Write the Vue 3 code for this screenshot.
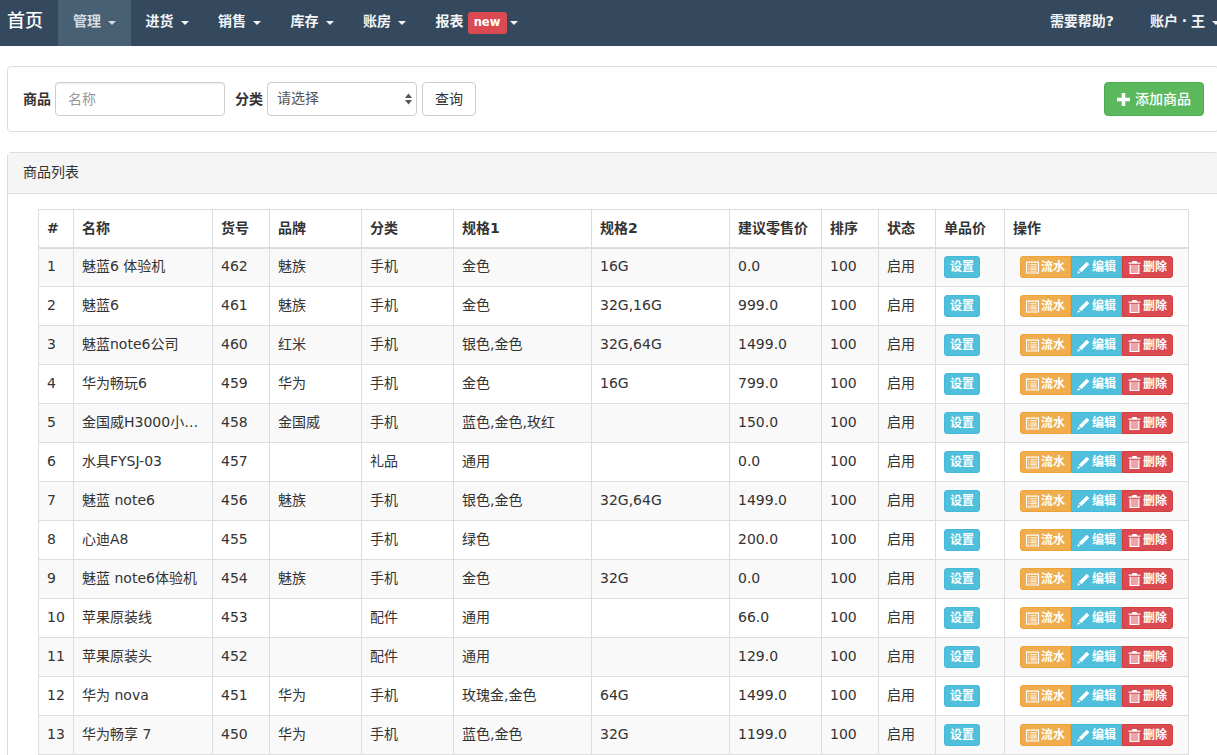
<script setup>
const menus = [
  { t: '管理', active: true }, { t: '进货' }, { t: '销售' }, { t: '库存' }, { t: '账房' }, { t: '报表', badge: 'new' }
]
const cols = [35, 139, 57, 92, 92, 138, 138, 92, 57, 57, 69, 184]
const heads = ['#', '名称', '货号', '品牌', '分类', '规格1', '规格2', '建议零售价', '排序', '状态', '单品价', '操作']
const rows = [
  [1, '魅蓝6 体验机', 462, '魅族', '手机', '金色', '16G', '0.0'],
  [2, '魅蓝6', 461, '魅族', '手机', '金色', '32G,16G', '999.0'],
  [3, '魅蓝note6公司', 460, '红米', '手机', '银色,金色', '32G,64G', '1499.0'],
  [4, '华为畅玩6', 459, '华为', '手机', '金色', '16G', '799.0'],
  [5, '金国威H3000小蜜蜂', 458, '金国威', '手机', '蓝色,金色,玫红', '', '150.0'],
  [6, '水具FYSJ-03', 457, '', '礼品', '通用', '', '0.0'],
  [7, '魅蓝 note6', 456, '魅族', '手机', '银色,金色', '32G,64G', '1499.0'],
  [8, '心迪A8', 455, '', '手机', '绿色', '', '200.0'],
  [9, '魅蓝 note6体验机', 454, '魅族', '手机', '金色', '32G', '0.0'],
  [10, '苹果原装线', 453, '', '配件', '通用', '', '66.0'],
  [11, '苹果原装头', 452, '', '配件', '通用', '', '129.0'],
  [12, '华为 nova', 451, '华为', '手机', '玫瑰金,金色', '64G', '1499.0'],
  [13, '华为畅享 7', 450, '华为', '手机', '蓝色,金色', '32G', '1199.0']
]
</script>

<template>
  <div class="page">
    <nav class="nav">
      <a class="brand">首页</a>
      <a v-for="m in menus" :key="m.t" class="item" :class="{ active: m.active }">
        {{ m.t }}<span v-if="m.badge" class="new">{{ m.badge }}</span><i class="caret" :class="{ tight: m.badge }"></i>
      </a>
      <span class="grow"></span>
      <a class="item help">需要帮助?</a>
      <a class="item acct">账户 · 王<i class="caret"></i></a>
    </nav>

    <section class="panel search">
      <label class="lab">商品</label>
      <input class="ctl name" placeholder="名称" />
      <label class="lab second">分类</label>
      <div class="ctl sel">
        <span>请选择</span>
        <svg class="updown" width="7" height="12" viewBox="0 0 7 12"><path d="M3.5 0.5 7 5H0zM3.5 11.5 0 7h7z" fill="#555" /></svg>
      </div>
      <button class="btn-q">查询</button>
      <span class="grow"></span>
      <button class="btn-add">
        <svg width="13" height="13" viewBox="0 0 13 13"><path d="M4.7 0h3.6v4.7H13v3.6H8.3V13H4.7V8.3H0V4.7h4.7z" fill="#fff" /></svg>
        添加商品
      </button>
    </section>

    <section class="panel list">
      <div class="head">商品列表</div>
      <div class="body">
        <table>
          <colgroup><col v-for="(c, i) in cols" :key="i" :style="{ width: c + 'px' }" /></colgroup>
          <thead>
            <tr><th v-for="h in heads" :key="h">{{ h }}</th></tr>
          </thead>
          <tbody>
            <tr v-for="r in rows" :key="r[0]">
              <td v-for="(v, i) in r" :key="i">{{ v }}</td>
              <td>100</td>
              <td>启用</td>
              <td class="btns"><button class="xs info">设置</button></td>
              <td class="btns">
                <div class="group">
                  <button class="xs warn">
                    <svg width="13" height="13" viewBox="0 0 12 12"><path d="M0 .5h12v11H0zM1 1.500v9h10v-9zM2 3h1v1H2zM4 3h6v1H4zM2 5h1v1H2zM4 5h6v1H4zM2 7h1v1H2zM4 7h6v1H4zM2 9h1v.8H2zM4 9h6v.8H4z" fill="#fff" fill-rule="evenodd" /></svg>流水
                  </button>
                  <button class="xs info">
                    <svg width="13" height="13" viewBox="0 0 12 12"><path d="M9 .6 11.400 3 4 10.400 1.600 8zM1.100 8.900l2 2-2.900.9z" fill="#fff" /></svg>编辑
                  </button>
                  <button class="xs danger">
                    <svg width="13" height="13" viewBox="0 0 12 12"><path d="M1.500 3.500h9V12h-9z" fill="#fff" fill-opacity=".5" /><path d="M4.200 0h3.600l.7 1.400h3v1.100H.5V1.400h3zM1.500 3.500h1V11h7V3.500h1V12h-9z" fill="#fff" /></svg>删除
                  </button>
                </div>
              </td>
            </tr>
          </tbody>
        </table>
      </div>
    </section>
  </div>
</template>

<style>
html, body { overflow: hidden; height: 755px; background: #fff; }
</style>

<style scoped>
.page {
  width: 1217px;
  height: 755px;
  overflow: hidden;
  font-family: "DejaVu Sans", "Noto Sans CJK SC", sans-serif;
  font-size: 14px;
  line-height: 20px;
  color: #333;
}
.nav {
  display: flex;
  height: 46px;
  background: #34495e;
  align-items: stretch;
}
.brand {
  width: 58px;
  padding-left: 7px;
  box-sizing: border-box;
  font-size: 18px;
  line-height: 41px;
  color: #fff;
  font-weight: 500;
}
.item {
  display: flex;
  align-items: center;
  padding: 0 14.5px 5px 15px;
  box-sizing: border-box;
  height: 100%;
  font-size: 14px;
  font-weight: 700;
  color: #f2f4f6;
  white-space: nowrap;
}
.item.active { background: #476073; color: #d5dbe0; }
.caret {
  display: inline-block;
  margin-left: 7px;
  margin-top: 4px;
  border-top: 4px solid currentColor;
  border-left: 4px solid transparent;
  border-right: 4px solid transparent;
}
.caret.tight { margin-left: 3px; }
.new {
  margin-left: 4px;
  width: 39px;
  text-align: center;
  height: 22px;
  margin-top: 5px;
  line-height: 21px;
  border-radius: 3px;
  background: #db4a52;
  color: #fff;
  font-size: 11.5px;
  font-weight: 700;
}
.grow { flex: 1; }
.help { padding: 0 21px 5px 20px; }
.acct { padding: 0 0 5px 15px; width: 82px; flex: none; word-spacing: -1px; }
.panel {
  margin-left: 7px;
  width: 1212px;
  box-sizing: border-box;
  border: 1px solid #ddd;
  border-radius: 4px;
  background: #fff;
}
.search {
  margin-top: 20px;
  height: 66px;
  display: flex;
  align-items: center;
  padding: 0 14px 0 15px;
}
.lab { font-weight: 700; font-size: 14px; color: #333; }
.second { margin-left: 10px; }
.ctl {
  box-sizing: border-box;
  height: 34px;
  border: 1px solid #ccc;
  border-radius: 4px;
  background: #fff;
  font: inherit;
  font-size: 14px;
  color: #555;
  margin-left: 4px;
  box-shadow: inset 0 1px 1px rgba(0, 0, 0, .075);
}
.name { width: 170px; padding: 0 12px; outline: 0; }
.name::placeholder { color: #999; }
.sel {
  width: 150px;
  display: flex;
  align-items: center;
  justify-content: space-between;
  padding: 0 4px 3px 9px;
  box-shadow: none;
}
.updown { margin-top: 3px; }
.btn-q {
  margin-left: 5px;
  width: 54px;
  height: 34px;
  border: 1px solid #ccc;
  border-radius: 4px;
  background: #fff;
  color: #333;
  font: inherit;
  padding: 0;
}
.btn-add {
  width: 100px;
  height: 34px;
  border: 1px solid #4cae4c;
  border-radius: 4px;
  background: #5cb85c;
  color: #fff;
  font: inherit;
  font-weight: 500;
  padding: 0;
  display: flex;
  align-items: center;
  justify-content: center;
  gap: 5px;
}
.list { margin-top: 20px; height: 700px; }
.head {
  height: 41px;
  line-height: 38px;
  padding-left: 15px;
  font-size: 14px;
  color: #333;
  background: #f5f5f5;
  border-bottom: 1px solid #ddd;
  box-sizing: border-box;
}
.body { padding: 15px 0 0 30px; }
table {
  table-layout: fixed;
  width: 1151px;
  border-collapse: collapse;
  border: 1px solid #ddd;
}
th, td {
  border: 1px solid #ddd;
  padding: 0 8px 2px;
  text-align: left;
  white-space: nowrap;
  overflow: hidden;
  text-overflow: ellipsis;
  height: 39px;
  box-sizing: border-box;
}
th { font-size: 14px; font-weight: 700; border-bottom: 2px solid #ddd; height: 38px; padding-bottom: 0; }
td { font-size: 14px; color: #333; }
td.btns { padding-bottom: 0; }
tbody tr:nth-child(odd) { background: #f9f9f9; }
.xs {
  height: 22px;
  padding: 0 5px 0 4.5px;
  border: 1px solid;
  border-radius: 3px;
  font: inherit;
  font-size: 12px;
  font-weight: 700;
  line-height: 18px;
  color: #fff;
  display: inline-flex;
  align-items: center;
  gap: 2.5px;
  white-space: nowrap;
  vertical-align: middle;
}
td > .xs { padding: 0 5px; }
.info { background: #4fbfdc; border-color: #46b8da; }
.warn { background: #f0ad4e; border-color: #eea236; }
.danger { background: #db4a52; border-color: #d43f3a; }
.group { display: flex; padding-left: 7px; }
.group .xs { border-radius: 0; }
.group .xs:first-child { border-radius: 3px 0 0 3px; }
.group .xs:last-child { border-radius: 0 3px 3px 0; }
</style>
